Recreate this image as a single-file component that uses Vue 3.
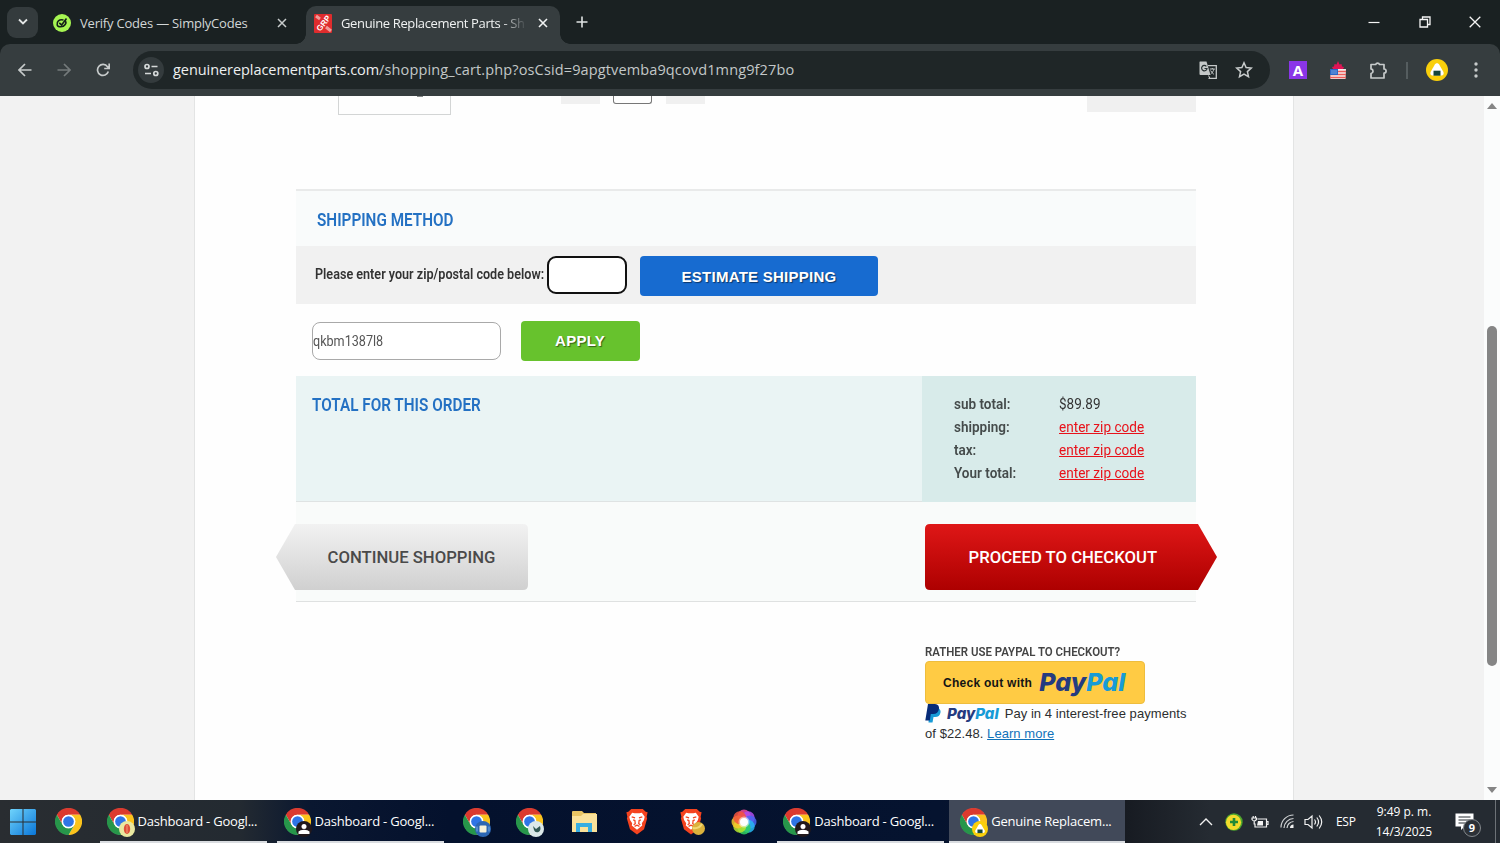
<template>
  <div class="screen">
    <!-- shared icon shapes -->
    <svg class="defs" width="0" height="0">
      <symbol id="chrome" viewBox="0 0 48 48">
        <circle cx="24" cy="24" r="23" fill="#fff" />
        <path fill="#dc3a2e" d="M24 12H44.8A24 24 0 0 0 3.2 12L13.6 30A12 12 0 0 1 24 12z" />
        <path fill="#fbc31c" transform="rotate(120 24 24)" d="M24 12H44.8A24 24 0 0 0 3.2 12L13.6 30A12 12 0 0 1 24 12z" />
        <path fill="#27964a" transform="rotate(240 24 24)" d="M24 12H44.8A24 24 0 0 0 3.2 12L13.6 30A12 12 0 0 1 24 12z" />
        <circle cx="24" cy="24" r="12" fill="#fff" />
        <circle cx="24" cy="24" r="9.5" fill="#2f75e6" />
      </symbol>
      <symbol id="brave" viewBox="0 0 24 28">
        <path fill="#f4431f" d="M6 1h12l3 3 2 .5L22 9l.5 2-3.2 11L12 27.500 4.700 22 1.500 11 2 9 1 4.500 3 4z" />
        <path fill="#fff" d="M7 4.800l2.500.6h5l2.500-.6L20 9l-.8 3.500-2.200 3.300.4 2.400L12 22.500l-5.400-4.300.4-2.400-2.200-3.300L4 9z" />
        <path fill="none" stroke="#f4431f" stroke-width="1.300" d="M6.500 9.300l3.500 1M17.500 9.300l-3.500 1M8 12.300l1.800.7.4 3.200-1.700 1.300M16 12.300l-1.800.7-.4 3.200 1.700 1.300M9.500 19l2.500-1.200 2.500 1.200" />
      </symbol>
      <symbol id="onigiri" viewBox="0 0 22 22">
        <circle cx="11" cy="11" r="11" fill="#f9cf0b" />
        <path fill="#fff" d="M11 4.200c1 0 1.700.5 2.300 1.500l4 7c1 2-.2 3.800-2 3.800H6.700c-1.800 0-3-1.800-2-3.800l4-7c.6-1 1.300-1.500 2.300-1.500z" />
        <path fill="#14463c" d="M7.500 11.700h7v5h-7z" />
      </symbol>
    </svg>

    <header class="tabstrip">
      <button class="tab-search">
        <svg width="12" height="8" viewBox="0 0 12 8"><path d="M2 1.500l4 4 4-4" fill="none" stroke="#e3e6e6" stroke-width="1.800" /></svg>
      </button>
      <div class="tab">
        <svg class="favicon" width="18" height="18" viewBox="0 0 18 18">
          <circle cx="9" cy="9" r="9" fill="#a6f552" />
          <path d="M13.500 4.500L8.600 11 6.300 8.800M10.500 6C6 5 3.500 7.500 4.200 10.800c.6 2.600 6 2.700 8-.3 1-1.500.9-2.500.3-3.500" fill="none" stroke="#142018" stroke-width="1.600" />
        </svg>
        <span class="tab-title t1">Verify Codes — SimplyCodes</span>
        <svg class="tab-close" width="10" height="10" viewBox="0 0 10 10"><path d="M1 1l8 8M9 1L1 9" stroke="#c9cdcd" stroke-width="1.500" /></svg>
      </div>
      <div class="tab active">
        <svg class="favicon grp-icon" width="18" height="19" viewBox="0 0 18 19">
          <rect width="18" height="19" rx="1" fill="#df2c2d" />
          <path d="M2 2l4 3M12 13l5 4" stroke="#ef9c9a" stroke-width="3" />
          <text x="9.500" y="12.500" class="grp" transform="rotate(-52 9 9.500)" text-anchor="middle">GRP</text>
        </svg>
        <span class="tab-title t2">Genuine Replacement Parts - Sh</span>
        <svg class="tab-close" width="10" height="10" viewBox="0 0 10 10"><path d="M1 1l8 8M9 1L1 9" stroke="#f1f3f3" stroke-width="1.600" /></svg>
      </div>
      <svg class="new-tab" width="12" height="12" viewBox="0 0 12 12"><path d="M6 .5v11M.5 6h11" stroke="#dfe3e3" stroke-width="1.600" /></svg>
      <div class="window-controls">
        <svg width="12" height="12" viewBox="0 0 12 12"><path d="M.5 6.500h11" stroke="#f5f5f5" stroke-width="1.200" /></svg>
        <svg width="12" height="12" viewBox="0 0 12 12"><path d="M1 3.500h7.500V11H1zM3.500 3V1H11v7.500H9" fill="none" stroke="#f5f5f5" stroke-width="1.300" /></svg>
        <svg width="12" height="12" viewBox="0 0 12 12"><path d="M.7.7l10.600 10.600M11.300.7L.7 11.300" stroke="#f5f5f5" stroke-width="1.300" /></svg>
      </div>
    </header>

    <nav class="toolbar">
      <svg class="nav-icon" width="14" height="14" viewBox="0 0 14 14"><path d="M13.500 7H1.500M7 1L1 7l6 6" fill="none" stroke="#c7cbcb" stroke-width="1.700" /></svg>
      <svg class="nav-icon" width="14" height="14" viewBox="0 0 14 14"><path d="M.5 7h12M7 1l6 6-6 6" fill="none" stroke="#747a7b" stroke-width="1.700" /></svg>
      <svg class="nav-icon" width="14" height="14" viewBox="0 0 14 14"><path d="M12.300 8.500A5.500 5.500 0 1 1 11.500 3.700L13 5.300M13.200 .5v5H8.200" fill="none" stroke="#c7cbcb" stroke-width="1.700" /></svg>
      <div class="address">
        <span class="site-info">
          <svg width="15" height="14" viewBox="0 0 15 14"><g fill="none" stroke="#d5d9d9" stroke-width="1.700"><circle cx="3" cy="3.500" r="2" /><path d="M7.500 3.500h6M1 10.500h6" /><circle cx="11.800" cy="10.500" r="2" /></g></svg>
        </span>
        <span class="url"><b>genuinereplacementparts.com</b>/shopping_cart.php?osCsid=9apgtvemba9qcovd1mng9f27bo</span>
        <svg class="translate" width="19" height="19" viewBox="0 0 19 19">
          <path d="M9 4.700h8.300v12.600H9.500" fill="none" stroke="#c4c8c8" stroke-width="1.300" />
          <path d="M1 .5h6.500L11.500 14H1.500Q.5 14 .5 13V1.500Q.5.500 1 .5z" fill="#c4c8c8" />
          <path d="M7.400 5.400A2.700 2.700 0 1 0 8 7.500H5.500" fill="none" stroke="#263031" stroke-width="1.200" />
          <path d="M10.800 8h5M13.300 7v1M15 8c-.5 2-2 4-3.300 5M11.600 9.500c.7 1.500 2 2.800 3.300 3.800M9.500 14.500l1.500 3" fill="none" stroke="#c4c8c8" stroke-width="1" />
        </svg>
        <svg class="star" width="18" height="18" viewBox="0 0 18 18"><path d="M9 1.800l2.100 4.800 5.200.5-3.900 3.500 1.100 5.100L9 13l-4.500 2.700 1.100-5.100L1.700 7.100l5.200-.5z" fill="none" stroke="#c7cbcb" stroke-width="1.500" /></svg>
      </div>
      <span class="ext-a">A</span>
      <svg class="ext-flag" width="18" height="19" viewBox="0 0 18 19">
        <path d="M4 8l-1-2 2-.5.500-2.500 2 .5L9 0l1.500 3.500 2-.5.500 2.500 2 .5-1 2z" fill="#e11455" />
        <path d="M1 8h16l-.5 10h-15z" fill="#f5e9e9" />
        <path d="M1 10.500h16M1 13.500h16M1 16.500h16" stroke="#ef5f5b" stroke-width="1.400" />
        <path d="M1 8h8v6H1z" fill="#2c68c8" />
        <path d="M2.500 10h5M2.500 12h5" stroke="#bcd7f5" stroke-width="1" stroke-dasharray="1 1" />
      </svg>
      <svg class="puzzle" width="19" height="19" viewBox="0 0 19 19"><path d="M2 3.500h4.700a2 2 0 0 1 3.800 0H15V8a2 2 0 0 1 0 4.200V17H2v-4.500c2.700-.6 2.700-4 0-4.600z" fill="none" stroke="#c7cbcb" stroke-width="1.700" stroke-linejoin="round" /></svg>
      <span class="divider"></span>
      <svg class="profile" width="22" height="22"><use href="#onigiri" /></svg>
      <svg class="menu" width="4" height="16" viewBox="0 0 4 16" fill="#c7cbcb"><circle cx="2" cy="2" r="1.700" /><circle cx="2" cy="8" r="1.700" /><circle cx="2" cy="14" r="1.700" /></svg>
    </nav>

    <main class="viewport">
      <div class="page">
        <div class="cart-tail">
          <span class="thumb"><i></i></span>
          <span class="qty-btn"></span>
          <span class="qty"></span>
          <span class="qty-btn"></span>
          <span class="price"></span>
        </div>

        <section class="shipping-head"><h2 class="cond">SHIPPING METHOD</h2></section>
        <section class="zip-row">
          <label class="cond" for="zip">Please enter your zip/postal code below:</label>
          <input id="zip" v-model="zip" class="zip" type="text" />
          <button class="btn blue">ESTIMATE SHIPPING</button>
        </section>
        <section class="coupon-row">
          <div class="coupon"><span class="cond">{{ coupon }}</span></div>
          <button class="btn green">APPLY</button>
        </section>

        <section class="totals">
          <div class="totals-title"><h2 class="cond">TOTAL FOR THIS ORDER</h2></div>
          <dl class="totals-list">
            <div v-for="row in totals" :key="row.label" class="total-line">
              <dt><span class="cond">{{ row.label }}</span></dt>
              <dd><span class="cond" :class="{ missing: !row.value }">{{ row.value || 'enter zip code' }}</span></dd>
            </div>
          </dl>
        </section>

        <section class="actions">
          <button class="arrow continue">
            <svg width="252" height="66" viewBox="0 0 252 66">
              <defs><linearGradient id="grey" x2="0" y2="1"><stop stop-color="#f2f2f2" /><stop offset="1" stop-color="#d0d0d0" /></linearGradient></defs>
              <path d="M19 0H247Q252 0 252 5V61Q252 66 247 66H19L0 33z" fill="url(#grey)" />
            </svg>
            <span>CONTINUE SHOPPING</span>
          </button>
          <button class="arrow checkout">
            <svg width="292" height="66" viewBox="0 0 292 66">
              <defs><linearGradient id="red" x2="0" y2="1"><stop stop-color="#df1717" /><stop offset="1" stop-color="#ad0000" /></linearGradient></defs>
              <path d="M5 0H273L292 33 273 66H5Q0 66 0 61V5Q0 0 5 0z" fill="url(#red)" />
            </svg>
            <span>PROCEED TO CHECKOUT</span>
          </button>
        </section>

        <aside class="paypal">
          <h3 class="cond">RATHER USE PAYPAL TO CHECKOUT?</h3>
          <button class="paypal-btn"><span>Check out with</span><b class="pp big">Pay<em>Pal</em></b></button>
          <p class="message">
            <svg class="pp-mark" width="16" height="19" viewBox="0 0 16 19">
              <path d="M4.500 4H13q3 1.500 2.500 4.500Q14.700 13 10 13H8.500l-1 5.500h-4z" fill="#179bd7" />
              <path d="M3 0h7q4.500.5 4 4.800Q13.200 10 8 10H5.800l-1 6.500H.3z" fill="#062b78" />
            </svg>
            <b class="pp small">Pay<em>Pal</em></b>
            <span class="m1">Pay in 4 interest-free payments</span>
          </p>
          <p class="message second">of $22.48. <a>Learn more</a></p>
        </aside>
      </div>
      <div class="scrollbar">
        <i class="up"></i>
        <i class="thumb-bar"></i>
        <i class="down"></i>
      </div>
    </main>

    <footer class="taskbar">
      <span class="start">
        <svg width="26" height="26" viewBox="0 0 26 26">
          <defs><linearGradient id="win" x2="1" y2="1"><stop stop-color="#6fd3fb" /><stop offset="1" stop-color="#0a76d8" /></linearGradient></defs>
          <path d="M1 0h11.500v12.500H0V1zM13.500 0H25l1 1v11.500H13.500zM0 13.500h12.500V26H1l-1-1zM13.500 13.500H26V25l-1 1H13.500z" fill="url(#win)" />
        </svg>
      </span>
      <span
        v-for="(app, i) in apps"
        :key="i"
        class="app"
        :class="[app.title ? 'wide' : 'slim', { current: app.current, first: i === 0 }]"
      >
        <span class="app-icon">
          <svg v-if="app.icon === 'chrome'" width="27" height="27"><use href="#chrome" /></svg>
          <svg v-else-if="app.icon === 'brave'" width="24" height="27"><use href="#brave" /></svg>
          <svg v-else-if="app.icon === 'folder'" width="26" height="22" viewBox="0 0 26 22">
            <path d="M1 1q0-1 1-1h9l2 2h12v19H1z" fill="#e9c564" />
            <path d="M1 5h9l2-2h14v18H1z" fill="#fbe29a" />
            <path d="M5 12h16v9h-4v-5H9v5H5z" fill="#37aee2" />
          </svg>
          <svg v-else width="26" height="26" viewBox="0 0 26 26">
            <circle v-for="(c, n) in petals" :key="c" cx="13" cy="7" r="6.500" :fill="c" fill-opacity=".85" :transform="`rotate(${n * 45} 13 13)`" />
            <circle cx="13" cy="13" r="5.500" fill="#fff" fill-opacity=".5" />
            <circle cx="13" cy="13" r="4" fill="#fff" />
          </svg>
          <svg v-if="app.badge === 'onigiri'" class="badge" width="16" height="16"><use href="#onigiri" /></svg>
          <svg v-else-if="app.badge === 'gold'" class="badge gold" width="13" height="13" viewBox="0 0 13 13">
            <circle cx="6.500" cy="6.500" r="6.500" fill="#dbb23c" /><path d="M1 6q6 1 9-4" fill="none" stroke="#f2d873" stroke-width="2" />
          </svg>
          <svg v-else-if="app.badge" class="badge" width="16" height="16" viewBox="0 0 16 16">
            <template v-if="app.badge === 'fruit'">
              <circle cx="8" cy="8" r="8" fill="#e9e8a0" /><ellipse cx="8" cy="8" rx="3.200" ry="5" fill="#dd5038" /><path d="M8 4v8" stroke="#f49877" />
            </template>
            <template v-else-if="app.badge === 'person'">
              <circle cx="8" cy="8" r="8" fill="#21181c" /><circle cx="8" cy="5.500" r="2.500" fill="#fff" /><path d="M2.500 13V10.500Q4 8.700 8 8.700t5.500 1.800V13z" fill="#fff" />
            </template>
            <template v-else-if="app.badge === 'blue'">
              <circle cx="8" cy="8" r="8" fill="#2c66b3" /><rect x="4.500" y="4.500" width="7" height="7" rx="1" fill="#f7f2da" /><path d="M2 5.500v5M14 5.500v5" stroke="#77b1ea" />
            </template>
            <template v-else>
              <circle cx="8" cy="8" r="8" fill="#dbe8e9" /><path d="M5 5l3 3 4-3q1.500 4-1.500 6Q7 12 6 9z" fill="#315853" />
            </template>
          </svg>
        </span>
        <span v-if="app.title" class="app-title">{{ app.title }}</span>
      </span>

      <div class="tray">
        <svg width="14" height="9" viewBox="0 0 14 9"><path d="M1 8l6-6 6 6" fill="none" stroke="#f2f2f2" stroke-width="1.400" /></svg>
        <svg class="tray-plus" width="18" height="18" viewBox="0 0 18 18"><circle cx="9" cy="9" r="8.700" fill="#4da52e" /><circle cx="8.500" cy="9.300" r="7.600" fill="#f3dc2c" /><path d="M9 5v8M5 9h8" stroke="#218a36" stroke-width="2.600" /></svg>
        <svg class="tray-battery" width="18" height="14" viewBox="0 0 18 14"><path d="M6.500 4h9v8H4V8.500M15.500 6.500h1.500v3h-1.500M1 3v1.500q2 3 4.500 0V3zM2.200 1v2M4.500 1v2M3.200 6v3.500" fill="none" stroke="#f2f2f2" stroke-width="1.200" /><path d="M7 6h5v4.500H6z" fill="#f2f2f2" /></svg>
        <svg class="tray-wifi" width="15" height="15" viewBox="0 0 15 15"><g fill="none" stroke="#d0d3d5" stroke-width="1.200"><path d="M1 13.500A12.500 12.500 0 0 1 13.500 1M4 14A10 10 0 0 1 13.500 4.500M7 14A7 7 0 0 1 13.500 7.500" /></g><path d="M10 14q0-3.500 3.500-3.500V14z" fill="#f2f2f2" /></svg>
        <svg class="tray-sound" width="19" height="16" viewBox="0 0 19 16"><path d="M1 5.500h3L8 2v12l-4-3.500H1zM10.500 5.500q2 2.500 0 5M12.800 3.500q3.500 4.500 0 9M15.200 1.500q5 6.500 0 13" fill="none" stroke="#f2f2f2" stroke-width="1.200" /></svg>
        <span class="lang">ESP</span>
        <span class="clock"><span>9:49 p. m.</span><span class="date">14/3/2025</span></span>
        <span class="notes">
          <svg width="19" height="17" viewBox="0 0 19 17"><path d="M.5.500h18v13h-9L6 17v-3.500H.5z" fill="#fff" /><path d="M3.500 4h12M3.500 7h12M3.500 10h8" stroke="#272c32" /></svg>
          <b>9</b>
        </span>
        <i class="peek"></i>
      </div>
    </footer>
  </div>
</template>

<script setup>
import { ref } from 'vue'

const zip = ref('')
const coupon = ref('qkbm1387l8')

// rows without a value wait for the zip code
const totals = [
  { label: 'sub total:', value: '$89.89' },
  { label: 'shipping:', value: '' },
  { label: 'tax:', value: '' },
  { label: 'Your total:', value: '' }
]

const petals = ['#f04a9b', '#b04df0', '#4a66f2', '#27b8f0', '#30d060', '#b8e52d', '#f9c82c', '#f5553d']

const apps = [
  { icon: 'chrome' },
  { icon: 'chrome', badge: 'fruit', title: 'Dashboard - Googl...' },
  { icon: 'chrome', badge: 'person', title: 'Dashboard - Googl...' },
  { icon: 'chrome', badge: 'blue' },
  { icon: 'chrome', badge: 'leaf' },
  { icon: 'folder' },
  { icon: 'brave' },
  { icon: 'brave', badge: 'gold' },
  { icon: 'petals' },
  { icon: 'chrome', badge: 'person', title: 'Dashboard - Googl...' },
  { icon: 'chrome', badge: 'onigiri', title: 'Genuine Replacem...', current: true }
]
</script>

<style>
body {
  overflow: hidden;
}
</style>

<style scoped>
.screen {
  width: 1500px;
  height: 843px;
  display: flex;
  flex-direction: column;
  overflow: hidden;
  background: #1a2122;
  font-family: "Open Sans", "Noto Sans", sans-serif;
}
.screen * { box-sizing: border-box; }
.defs { position: absolute; }
svg { display: block; flex: none; }
button { border: none; padding: 0; font-family: inherit; }
h2, h3, p, dl, dd { margin: 0; }

/* narrow Roboto */
.cond {
  display: inline-block;
  font-family: Roboto, sans-serif;
  white-space: nowrap;
  transform: scaleX(0.88);
  transform-origin: left center;
}

/* --- tabs --- */
.tabstrip {
  height: 44px;
  flex: none;
  display: flex;
  align-items: center;
}
.tab-search {
  width: 31px;
  height: 31px;
  margin-left: 7px;
  border-radius: 9px;
  background: #343b3d;
  display: flex;
  align-items: center;
  justify-content: center;
}
.tab {
  width: 252px;
  height: 38px;
  margin-top: 6px;
  padding: 0 3px 4px 15px;
  display: flex;
  align-items: center;
  color: #d3d7d7;
}
.tab.active {
  position: relative;
  width: 254px;
  margin-left: 16px;
  padding: 0 12px 4px 8px;
  border-radius: 10px 10px 0 0;
  background: #363d3f;
  color: #f0f2f2;
}
.tab.active::before,
.tab.active::after {
  content: "";
  position: absolute;
  bottom: 0;
  left: -10px;
  width: 10px;
  height: 10px;
  background: radial-gradient(circle at 0 0, transparent 9.500px, #363d3f 10px);
}
.tab.active::after {
  left: auto;
  right: -10px;
  background: radial-gradient(circle at 100% 0, transparent 9.500px, #363d3f 10px);
}
.tab-title {
  flex: 1;
  margin: 0 10px 0 9px;
  font-size: 13px;
  white-space: nowrap;
}
.t1 { letter-spacing: -0.2px; }
.t2 {
  letter-spacing: -0.360px;
  mask-image: linear-gradient(to right, #000 160px, transparent 186px);
}
.grp { font: bold 8px "Liberation Sans", sans-serif; fill: #fff; }
.grp-icon { overflow: visible; }
.new-tab { margin-left: 16px; }
.window-controls {
  margin-left: auto;
  padding-right: 19px;
  display: flex;
  gap: 38.500px;
}

/* --- toolbar --- */
.toolbar {
  height: 52px;
  flex: none;
  display: flex;
  align-items: center;
  padding-left: 18px;
  border-radius: 10px 10px 0 0;
  background: #363d3f;
}
.nav-icon { margin-right: 25px; }
.address {
  width: 1137px;
  height: 38px;
  margin-left: -2px;
  padding-left: 5px;
  border-radius: 19px;
  background: #1f2627;
  display: flex;
  align-items: center;
}
.site-info {
  width: 26px;
  height: 26px;
  border-radius: 50%;
  background: #343b3d;
  display: flex;
  align-items: center;
  justify-content: center;
}
.url {
  flex: 1;
  margin: -2px 0 0 9px;
  font-size: 14.500px;
  color: #c3c8c8;
  letter-spacing: 0.130px;
}
.url b { font-weight: 400; color: #eef0f0; letter-spacing: -0.060px; }
.translate { margin-right: 17px; }
.star { margin-right: 17px; }
.ext-a {
  width: 18px;
  height: 18px;
  margin-left: 19px;
  background: #8a35e8;
  color: #fff;
  font: bold 15px/18px "Open Sans", sans-serif;
  text-align: center;
}
.ext-flag { margin-left: 22px; }
.puzzle { margin-left: 22px; }
.divider { width: 2px; height: 17px; margin-left: 18px; background: #555d5f; }
.profile { margin-left: 18px; }
.menu { margin-left: 26px; }

/* --- page --- */
.viewport {
  height: 704px;
  flex: none;
  display: flex;
  justify-content: space-between;
  background: #f2f2f2;
}
.page {
  width: 1100px;
  margin-left: 194px;
  padding: 0 97px 0 101px;
  border: solid #e3e4e4;
  border-width: 0 1px;
  background: #fefefe;
}
.cart-tail {
  height: 93px;
  display: flex;
  align-items: flex-start;
}
.thumb {
  width: 113px;
  height: 19px;
  margin-left: 42px;
  padding-left: 78px;
  border: solid #d3d5d5;
  border-width: 0 1px 1px;
}
.thumb i { display: block; width: 6px; height: 1px; background: #858989; }
.qty-btn { width: 39px; height: 8px; background: #f0f0f0; }
.thumb + .qty-btn { margin-left: 110px; }
.qty {
  width: 39px;
  height: 8px;
  margin: 0 14px 0 13px;
  border: solid #777;
  border-width: 0 1px 1px;
  border-radius: 0 0 3px 3px;
}
.price { width: 109px; height: 16px; margin-left: auto; background: #f0f0f0; }
.shipping-head {
  height: 57px;
  padding: 18px 0 0 21px;
  border-top: 2px solid #e9eaea;
  background: #f9fbfb;
}
h2 {
  font-size: 18px;
  line-height: 20px;
  font-weight: 600;
  color: #2471c3;
}
h2.cond { transform: scaleX(0.850); }
.zip-row {
  height: 58px;
  padding: 10px 0 0 19px;
  background: #f1f1f1;
  display: flex;
  align-items: flex-start;
}
.zip-row label {
  width: 232px;
  line-height: 36px;
  font-size: 14px;
  font-weight: 600;
  color: #333;
  transform: scaleX(0.9);
}
.zip {
  width: 80px;
  height: 38px;
  border: 2px solid #111;
  border-radius: 9px;
  background: #fff;
  outline: none;
}
.btn {
  height: 40px;
  border-radius: 4px;
  color: #fff;
  font: bold 15px "Liberation Sans", Arial, sans-serif;
  letter-spacing: 0.250px;
  text-shadow: 1px 1px 1px rgba(0, 0, 0, 0.5);
}
.blue { width: 238px; margin-left: 13px; background: #176bd0; }
.green { width: 119px; margin-left: 20px; padding: 0 1px 1px 0; background: #67c22d; }
.coupon-row {
  height: 72px;
  padding: 17px 0 0 16px;
  display: flex;
  align-items: flex-start;
}
.coupon {
  width: 189px;
  height: 38px;
  margin-top: 1px;
  border: 1px solid #a9a9a9;
  border-radius: 8px;
  background: #fff;
  font-size: 14px;
  line-height: 35px;
  color: #555;
}
.coupon .cond { transform: scaleX(0.9); }
.totals { height: 126px; display: flex; }
.totals-title {
  width: 626px;
  padding: 18px 0 0 16px;
  border-bottom: 1px solid #dfe3e3;
  background: #eaf4f4;
}
.totals-list { flex: 1; padding: 15px 0 0 32px; background: #d8ebea; }
.total-line {
  display: flex;
  height: 23px;
  line-height: 24px;
  font-size: 15px;
  color: #333;
}
.total-line dt { width: 105px; font-weight: 600; color: #454b4b; }
.total-line .cond { transform: scaleX(0.9); }
.total-line .missing { color: #e8121b; text-decoration: underline; transform: scaleX(0.906); }
.actions {
  height: 100px;
  display: flex;
  align-items: flex-start;
  justify-content: space-between;
  padding-top: 22px;
  border-bottom: 1px solid #dfe1e1;
  background: #f9fbfa;
}
.arrow {
  height: 66px;
  background: none;
  display: grid;
  align-items: center;
}
.arrow > * { grid-area: 1 / 1; }
.arrow span { font: 500 16.700px Roboto, sans-serif; text-align: left; white-space: nowrap; }
.continue { margin-left: -20px; color: #4a4a4a; }
.continue span { padding-left: 51.500px; }
.checkout { margin-right: -21px; color: #fff; }
.checkout span { padding-left: 43.500px; }

.paypal { margin: 41px 0 0 629px; }
.paypal h3 { display: block; height: 18px; font-size: 13px; line-height: 18px; font-weight: 600; color: #444; }
.paypal-btn {
  width: 220px;
  height: 43px;
  padding-left: 17px;
  border: 1px solid #eebd3d;
  border-radius: 4px;
  background: #ffcb44;
  display: flex;
  align-items: center;
  font: bold 12px "Liberation Sans", Arial, sans-serif;
  letter-spacing: 0.270px;
  color: #141414;
}
.pp {
  font-family: Inter, sans-serif;
  font-weight: 800;
  font-style: italic;
  font-feature-settings: "cv11";
  color: #253b80;
}
.pp em { color: #179bd7; }
.big { margin: -1px 0 0 7px; font-size: 25px; letter-spacing: 0; }
.message {
  height: 20px;
  margin-top: -1px;
  display: flex;
  align-items: center;
  font: 13px "Liberation Sans", Arial, sans-serif;
  color: #2c2e2f;
  white-space: pre;
}
.second { margin-top: 0; }
.m1, .second { letter-spacing: 0.060px; }
.small { margin: 0 6px 0 6px; font-size: 15px; }
.message a { color: #1072ba; text-decoration: underline; }

.scrollbar {
  width: 16px;
  background: #fbfcfc;
  display: flex;
  flex-direction: column;
  align-items: center;
}
.up, .down {
  margin-top: 7px;
  border: 5px solid transparent;
  border-top-width: 0;
  border-bottom: 6px solid #858585;
}
.thumb-bar { width: 10px; height: 340px; margin-top: 217px; border-radius: 5px; background: #858585; }
.down {
  margin-top: 121px;
  border-bottom-width: 0;
  border-top: 6px solid #858585;
}

/* --- taskbar --- */
.taskbar {
  height: 43px;
  flex: none;
  display: flex;
  background: linear-gradient(to right, #292d31 0, #232a31 240px, #0a1730 310px, #04112d 450px, #05132f 940px, #171b22 1126px, #252b32 1210px);
}
.start { width: 42px; padding: 9px 0 0 10px; }
.app { display: flex; align-items: center; }
.slim { width: 53.600px; justify-content: center; }
.first { margin-right: 4px; }
.wide {
  width: 167px;
  margin-right: 10px;
  padding-left: 7px;
  border-bottom: 2px solid #d9dce0;
}
.wide + .slim { margin-left: -4px; }
.slim:not(.first) + .wide { margin: 0 5px 0 6px; padding-left: 6px; }
.app.current { width: 176px; padding-left: 11px; background: #414959; }
.app-icon { position: relative; }
.badge { position: absolute; right: -1px; bottom: -2px; }
.gold { right: -2px; bottom: 0; }
.wide .app-icon { top: 1px; }
.app-title {
  margin-left: 4px;
  font-size: 13px;
  color: #fff;
  white-space: nowrap;
  letter-spacing: -0.200px;
}
.tray {
  flex: 1;
  display: flex;
  align-items: center;
  justify-content: flex-end;
  color: #fff;
}
.tray-plus { margin-left: 12px; }
.tray-battery { margin-left: 8px; }
.tray-wifi { margin-left: 11px; }
.tray-sound { margin-left: 9px; }
.lang { width: 21px; margin-left: 13px; font-size: 12px; letter-spacing: -0.300px; }
.clock {
  width: 60px;
  margin-left: 17px;
  font-size: 12px;
  line-height: 20px;
  text-align: center;
  white-space: nowrap;
  letter-spacing: 0;
  display: flex;
  flex-direction: column;
}
.date { letter-spacing: -0.050px; }
.notes { position: relative; width: 19px; margin-left: 21px; }
.notes b {
  position: absolute;
  left: 8px;
  top: 6px;
  width: 18px;
  height: 18px;
  border: 1px solid #83888c;
  border-radius: 50%;
  background: #2c3137;
  font-size: 11px;
  line-height: 16px;
  text-align: center;
}
.peek { width: 1px; height: 43px; margin: 0 4px 0 21px; background: #6d7277; }
</style>
